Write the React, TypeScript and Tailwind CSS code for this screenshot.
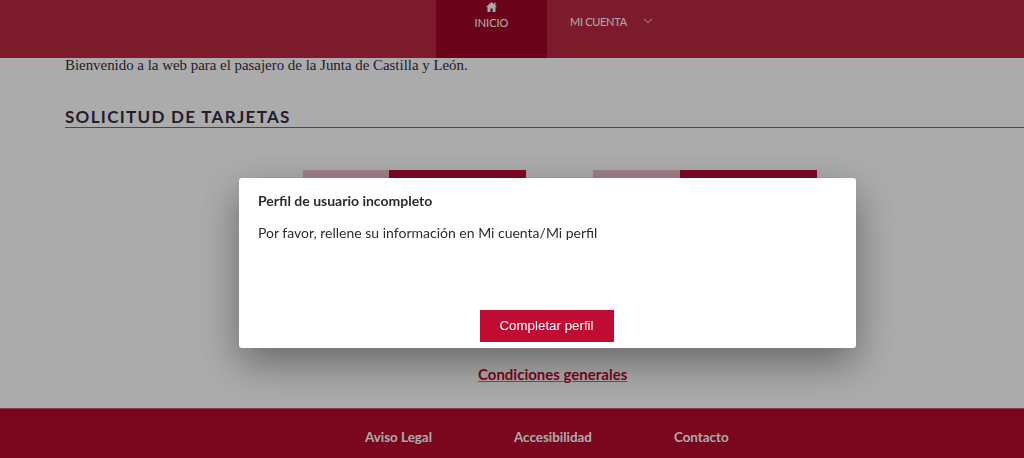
import React from "react";
import { ChevronDown } from "lucide-react";

const footerLinks = ["Aviso Legal", "Accesibilidad", "Contacto"];

const App: React.FC = () => {
  return (
    <div className="relative flex h-[458px] flex-col overflow-hidden bg-white font-['Lato',sans-serif]">
      {/* Header */}
      <header className="flex h-[58px] shrink-0 bg-[#bb2840] pl-[436px]">
        <div className="flex h-full w-[111px] flex-col items-center bg-[#a00628] pt-[2px] text-white">
          <svg width="11" height="10" viewBox="0 0 11 10" fill="currentColor">
            <path d="M5.5 0 L8 2.3 L8 0.8 L9.4 0.8 L9.4 3.6 L11 5 L9.5 5 L9.5 10 L6.6 10 L6.6 6.6 L4.4 6.6 L4.4 10 L1.5 10 L1.5 5 L0 5 Z" />
          </svg>
          <span className="mt-[3px] text-[11px] leading-[16px]">INICIO</span>
        </div>
        <div className="flex pl-[23px] pt-[14px] text-white">
          <span className="text-[11px] leading-[16px] tracking-[-0.3px]">MI CUENTA</span>
          <ChevronDown className="ml-[14px] h-[14px] w-[14px] shrink-0" strokeWidth={1.5} />
        </div>
      </header>

      {/* Main */}
      <main className="flex-1 pl-[65px] text-[#332e40]">
        <p className="font-['Liberation_Serif',serif] text-[14.9px] leading-[15px]">
          Bienvenido a la web para el pasajero de la Junta de Castilla y León.
        </p>
        <h2 className="mt-[33px] text-[17px] leading-[21px] font-bold tracking-[1.3px]">SOLICITUD DE TARJETAS</h2>
        <div className="h-px bg-[#d0405f]" />
        <div className="mt-[42px] flex pl-[238px]">
          <div className="h-[60px] w-[86px] bg-[#efc0cc]" />
          <div className="h-[60px] w-[137px] bg-[#c00c33]" />
          <div className="ml-[67px] h-[60px] w-[87px] bg-[#efc0cc]" />
          <div className="h-[60px] w-[137px] bg-[#c00c33]" />
        </div>
        <div className="mt-[132px] pl-[413px]">
          <a className="text-[15px] leading-[20px] font-bold text-[#b6092d] underline decoration-[#d0607a]">
            Condiciones generales
          </a>
        </div>
      </main>

      {/* Footer */}
      <footer className="flex h-[50px] shrink-0 items-center gap-[82px] border-t border-[#c4606f] bg-[#b6092d] pl-[365px] pt-[8px] text-[13.4px] font-bold text-white">
        {footerLinks.map((link) => (
          <span key={link}>{link}</span>
        ))}
      </footer>

      {/* Overlay and modal */}
      <div className="fixed inset-0 bg-black/33 pt-[178px] pl-[239px]">
        <div className="flex h-[170px] w-[617px] flex-col rounded-[3px] bg-white px-[19px] text-[#2b2b33] shadow-[0_15px_40px_rgba(0,0,0,0.4)]">
          <h3 className="mt-[15px] text-[14px] leading-[16px] font-bold">Perfil de usuario incompleto</h3>
          <p className="mt-[16px] text-[14px] leading-[16px]">Por favor, rellene su información en Mi cuenta/Mi perfil</p>
          <div className="mt-auto mb-[6px] flex justify-center pr-[2px]">
            <button className="h-[32px] w-[134px] bg-[#c00c33] font-['Liberation_Sans',sans-serif] text-[13.33px] text-white">
              Completar perfil
            </button>
          </div>
        </div>
      </div>
    </div>
  );
};

export default App;
